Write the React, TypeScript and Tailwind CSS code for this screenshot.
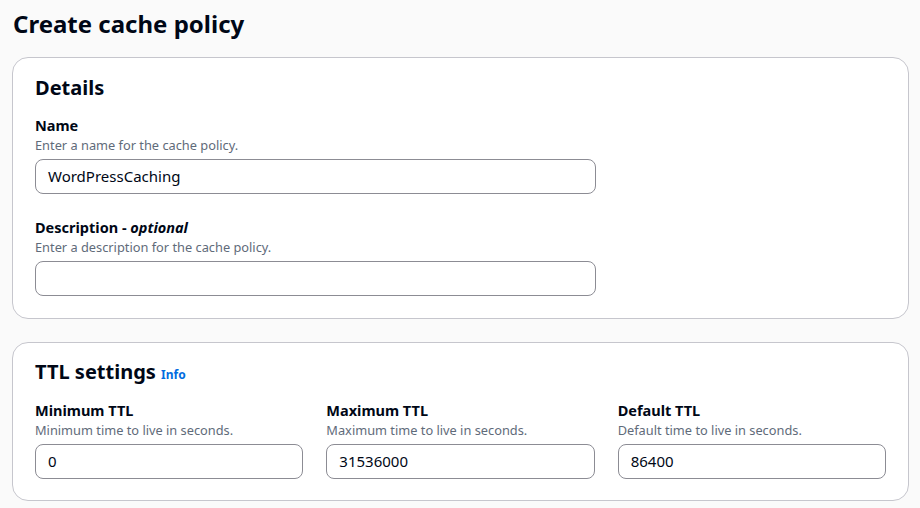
import React from "react";

const font = { fontFamily: '"Noto Sans", "Open Sans", sans-serif' };

function Field({
  label,
  optional,
  help,
  value,
}: {
  label: string;
  optional?: boolean;
  help: string;
  value: string;
}) {
  return (
    <div className="flex flex-col">
      <div className="text-[14.5px] leading-[20px] font-bold text-[#000716]">
        {label}
        {optional && (
          <>
            {" - "}
            <i>optional</i>
          </>
        )}
      </div>
      <div className="mt-[2px] text-[12.8px] leading-[16px] text-[#5f6b7a]">{help}</div>
      <div className="mt-[6px] h-[35px] rounded-[8px] border border-[#8c8c94] bg-white px-3 flex items-center text-[15px] text-[#000716]">
        {value}
      </div>
    </div>
  );
}

export default function App() {
  return (
    <div style={font} className="min-h-[508px] w-[920px] bg-[#fafafa] px-[12px] pt-[8px]">
      <h1 className="pl-[1px] text-[24px] leading-[32px] font-bold text-[#000716]">Create cache policy</h1>

      <div className="mt-[17px] w-[897px] rounded-[16px] border border-[#c6c6cd] bg-white px-[22px] pt-[16px] pb-[22px]">
        <h2 className="text-[20px] leading-[28px] font-bold text-[#000716]">Details</h2>
        <div className="mt-[13px] w-[561px]">
          <Field label="Name" help="Enter a name for the cache policy." value="WordPressCaching" />
        </div>
        <div className="mt-[23px] w-[561px]">
          <Field label="Description" optional help="Enter a description for the cache policy." value="" />
        </div>
      </div>

      <div className="mt-[23px] w-[897px] rounded-[16px] border border-[#c6c6cd] bg-white px-[22px] pt-[15px] pb-[21px]">
        <h2 className="text-[20px] leading-[28px] font-bold text-[#000716]">
          TTL settings{" "}
          <span className="text-[12px] font-bold text-[#006ce0]">Info</span>
        </h2>
        <div className="mt-[11px] grid grid-cols-3 gap-x-[23px]">
          <Field label="Minimum TTL" help="Minimum time to live in seconds." value="0" />
          <Field label="Maximum TTL" help="Maximum time to live in seconds." value="31536000" />
          <Field label="Default TTL" help="Default time to live in seconds." value="86400" />
        </div>
      </div>
    </div>
  );
}
